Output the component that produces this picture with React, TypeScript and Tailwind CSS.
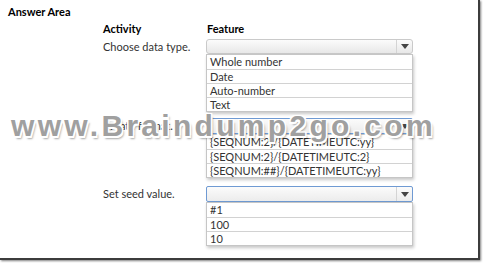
import React from 'react';

type Field = {
  label: string;
  options: string[];
  focused: boolean;
  gap: string;
};

const fields: Field[] = [
  { label: 'Choose data type.', options: ['Whole number', 'Date', 'Auto-number', 'Text'], focused: false, gap: 'mt-0' },
  {
    label: 'Create format.',
    options: ['{SEQNUM:2}/{DATETIMEUTC:yy}', '{SEQNUM:2}/{DATETIMEUTC:2}', '{SEQNUM:##}/{DATETIMEUTC:yy}'],
    focused: true,
    gap: 'mt-[6px]',
  },
  { label: 'Set seed value.', options: ['#1', '100', '10'], focused: true, gap: 'mt-[8px]' },
];

function Dropdown({ focused }: { focused: boolean }) {
  return (
    <div
      className={
        focused
          ? 'flex h-[16px] w-[207px] rounded-[2px] border border-[#6f9ad3] bg-gradient-to-b from-[#fbfbfb] to-[#ececec]'
          : 'flex h-[15px] w-[207px] rounded-[3px] border border-[#cacaca] bg-gradient-to-b from-[#fbfbfb] to-[#e8e8e8]'
      }
    >
      <div className="flex-1" />
      <div className="flex w-[16px] items-center justify-center border-l border-[#d4d4d4]">
        <svg width="8" height="5" viewBox="0 0 8 5">
          <path d="M0 0 H8 L4 5 Z" fill="#444" />
        </svg>
      </div>
    </div>
  );
}

function OptionList({ options }: { options: string[] }) {
  return (
    <div className="w-[207px] border border-[#c6c6c6] bg-white shadow-[1px_2px_3px_rgba(0,0,0,0.22)]">
      {options.map((o, i) => (
        <div
          key={o}
          className={
            'h-[14px] pl-[3px] text-[11px] leading-[14px] text-[#333] whitespace-nowrap' +
            (i > 0 ? ' border-t border-[#d2d2d2]' : '')
          }
        >
          {o}
        </div>
      ))}
    </div>
  );
}

export default function App() {
  return (
    <div className="relative h-[263px] w-[483px] bg-white font-['Lato',sans-serif]">
      <div className="h-[260px] w-[480px] border-b-2 border-r-2 border-[#3c3c3c] shadow-[1px_1px_2px_rgba(0,0,0,0.5)]">
        <div className="pl-[8px] pt-[5px] text-[11px] font-bold leading-[14px] text-black">Answer Area</div>

        <div className="ml-[103px] mt-[3px] flex text-[11px] font-bold leading-[14px] text-black">
          <div className="w-[104px]">Activity</div>
          <div>Feature</div>
        </div>

        <div className="ml-[103px] mt-[3px] flex flex-col">
          {fields.map((f) => (
            <div key={f.label} className={'flex ' + f.gap}>
              <div className={'w-[103px] text-[11px] text-[#333] ' + (f.focused ? 'leading-[16px]' : 'leading-[15px]')}>
                {f.label}
              </div>
              <div className="flex flex-col">
                <Dropdown focused={f.focused} />
                <OptionList options={f.options} />
              </div>
            </div>
          ))}
        </div>
      </div>

      {/* watermark over the page */}
      <div className="pointer-events-none absolute left-[11px] top-[110px] font-['Liberation_Sans',sans-serif] text-[30px] font-bold leading-[32px] tracking-[3.3px] text-[#a0a0a0] whitespace-nowrap [text-shadow:-1.5px_-1.5px_0_#fff,1.5px_-1.5px_0_#fff,-1.5px_1.5px_0_#fff,1.5px_1.5px_0_#fff,0_-1.5px_0_#fff,0_1.5px_0_#fff,2px_3px_2px_rgba(0,0,0,0.35)]">
        www.Braindump2go.com
      </div>
    </div>
  );
}
